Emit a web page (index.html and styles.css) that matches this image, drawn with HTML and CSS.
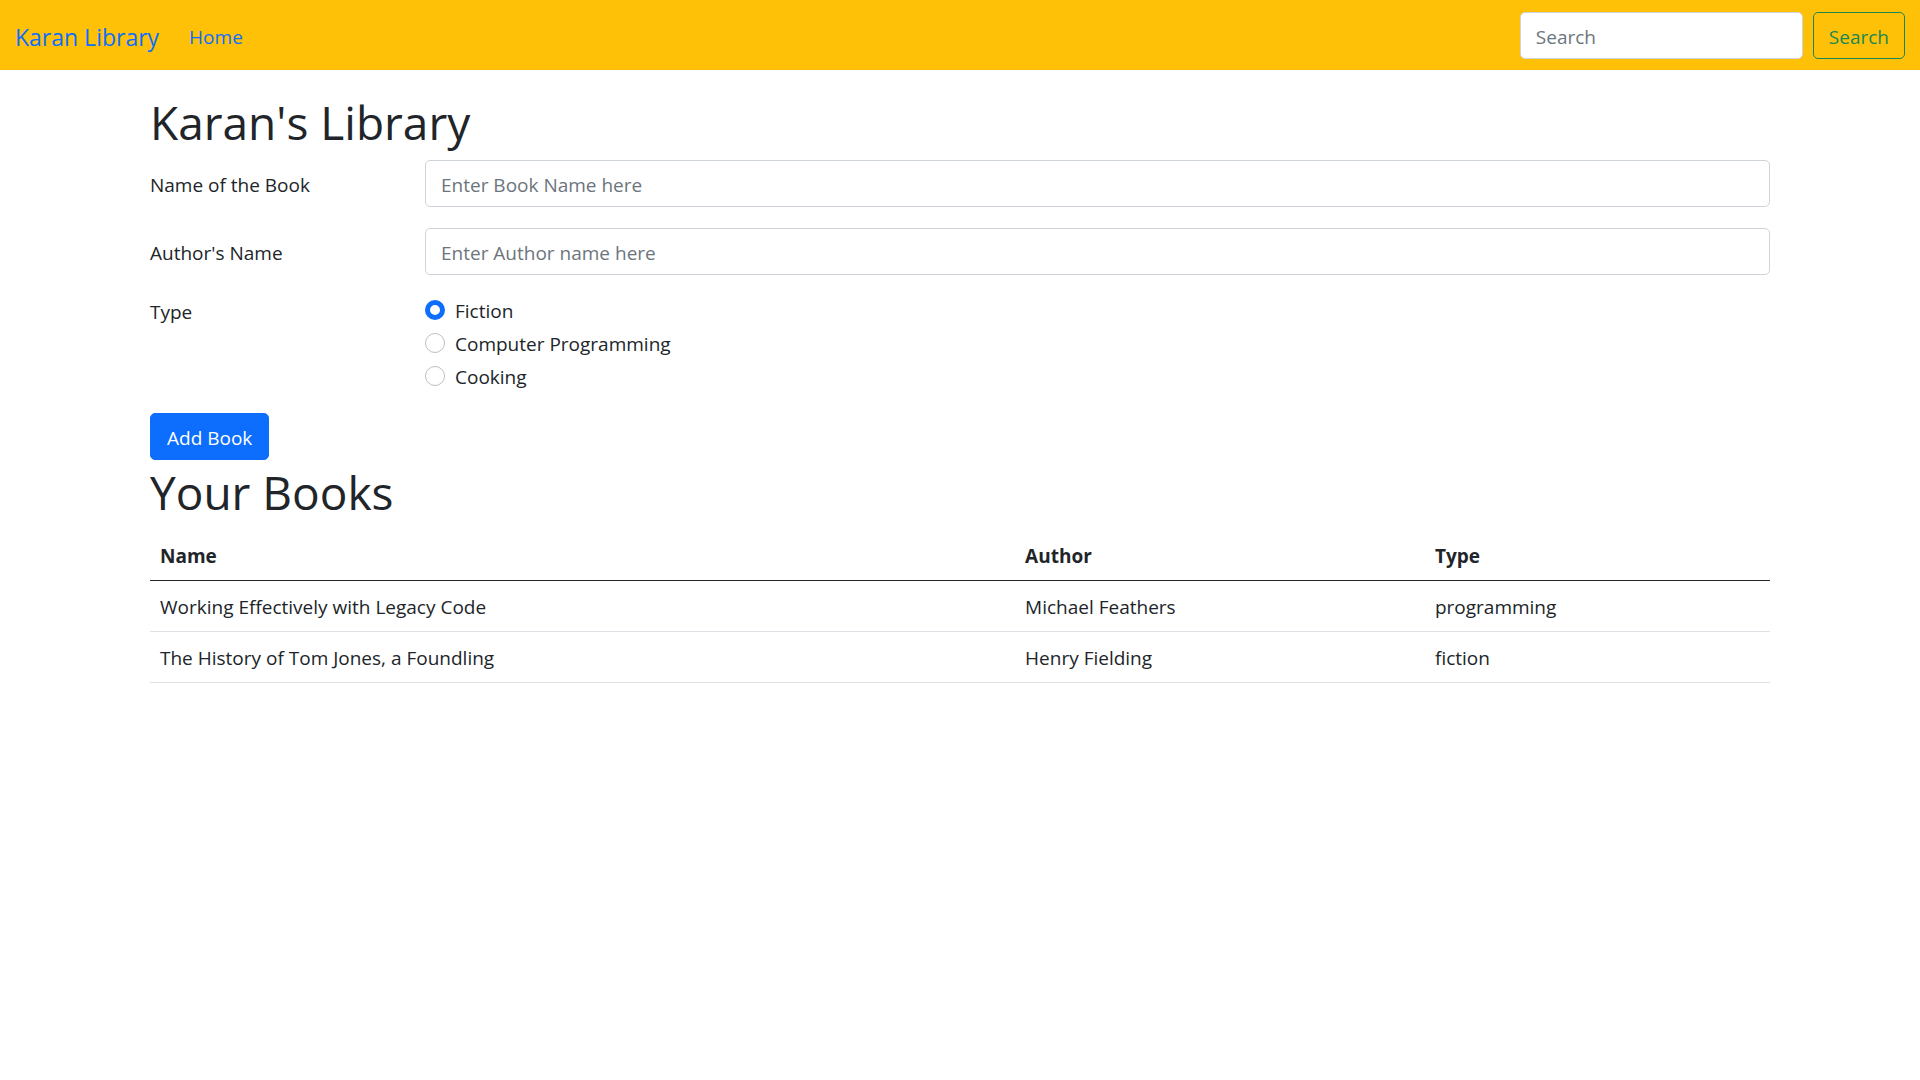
FILE: index.html
```html
<!DOCTYPE html>
<html lang="en">
<head>
  <meta charset="utf-8">
  <meta name="viewport" content="width=device-width, initial-scale=1">
  <title>Karan Library</title>
  <link rel="stylesheet" href="styles.css">
</head>
<body>
  <nav class="navbar">
    <a class="navbar-brand" href="#">Karan Library</a>
    <a class="nav-link" href="#">Home</a>
    <form class="search-form" role="search">
      <input class="form-control search-input" type="search" placeholder="Search" aria-label="Search">
      <button class="btn btn-outline" type="submit">Search</button>
    </form>
  </nav>

  <main class="container">
    <h1 class="heading">Karan's Library</h1>
    <form class="book-form">
      <div class="form-row">
        <label class="form-label" for="bookName">Name of the Book</label>
        <div class="form-field">
          <input class="form-control" type="text" id="bookName" placeholder="Enter Book Name here">
        </div>
      </div>
      <div class="form-row">
        <label class="form-label" for="author">Author's Name</label>
        <div class="form-field">
          <input class="form-control" type="text" id="author" placeholder="Enter Author name here">
        </div>
      </div>
      <div class="form-row" role="radiogroup" aria-labelledby="typeLabel">
        <div class="form-legend" id="typeLabel">Type</div>
        <div class="form-field form-checks">
          <div class="form-check">
            <input class="form-radio" type="radio" name="type" id="fiction" checked>
            <label for="fiction">Fiction</label>
          </div>
          <div class="form-check">
            <input class="form-radio" type="radio" name="type" id="programming">
            <label for="programming">Computer Programming</label>
          </div>
          <div class="form-check">
            <input class="form-radio" type="radio" name="type" id="cooking">
            <label for="cooking">Cooking</label>
          </div>
        </div>
      </div>
      <button class="btn btn-primary" type="submit">Add Book</button>
    </form>

    <h1 class="heading">Your Books</h1>
    <table class="table">
      <thead>
        <tr>
          <th class="col-name" scope="col">Name</th>
          <th class="col-author" scope="col">Author</th>
          <th scope="col">Type</th>
        </tr>
      </thead>
      <tbody>
        <tr>
          <td>Working Effectively with Legacy Code</td>
          <td>Michael Feathers</td>
          <td>programming</td>
        </tr>
        <tr>
          <td>The History of Tom Jones, a Foundling</td>
          <td>Henry Fielding</td>
          <td>fiction</td>
        </tr>
      </tbody>
    </table>
  </main>
</body>
</html>
```
FILE: styles.css
```css
*,
*::before,
*::after {
  box-sizing: border-box;
}

body {
  margin: 0;
  background: #fff;
  color: #212529;
  font-family: "Segoe UI", "Open Sans", "Noto Sans", sans-serif;
  font-size: 19px;
  line-height: 30px;
}

.navbar {
  display: flex;
  align-items: center;
  padding: 12px 15px 11px;
  background: #ffc107;
}

.navbar a {
  padding-top: 2px;
  color: #0d6efd;
  text-decoration: none;
}

.navbar-brand {
  margin-right: 30px;
  font-size: 23px;
}

.search-form {
  display: flex;
  gap: 10px;
  margin-left: auto;
}

.search-form .search-input {
  width: 283px;
}

.form-control {
  display: block;
  width: 100%;
  height: 47px;
  margin: 0;
  padding: 9px 15px 6px;
  border: 1px solid #ced4da;
  border-radius: 5px;
  background: #fff;
  color: #212529;
  font: inherit;
  appearance: none;
}

.form-control::placeholder {
  color: #6c757d;
  opacity: 1;
}

.btn {
  height: 47px;
  padding: 2px 15px 0;
  border: 1px solid;
  border-radius: 5px;
  font: inherit;
  white-space: nowrap;
  cursor: pointer;
}

.btn-outline {
  border-color: #198754;
  background: transparent;
  color: #198754;
}

.btn-primary {
  display: block;
  padding: 2px 16px 0;
  border-color: #0d6efd;
  background: #0d6efd;
  color: #fff;
}

.container {
  max-width: 1650px;
  margin: 20px auto;
  padding: 0 15px;
}

.heading {
  margin: 0 0 6px;
  font-size: 46px;
  font-weight: 400;
  line-height: 64px;
}

.form-row {
  display: grid;
  grid-template-columns: 1fr 5fr;
  margin: 0 -15px 21px;
}

.form-label,
.form-legend,
.form-field {
  padding: 0 15px;
}

.form-label {
  padding-top: 10px;
}

.form-legend {
  padding-top: 1px;
}

.form-checks {
  display: grid;
  gap: 3px;
}

.form-check {
  display: flex;
  gap: 10px;
}

.form-radio {
  flex: none;
  width: 20px;
  height: 20px;
  margin: 4px 0 0;
  border: 1px solid #bfbfbf;
  border-radius: 50%;
  background: #fff;
  appearance: none;
}

.form-radio:checked {
  border: 5px solid #0d6efd;
}

.table {
  width: 100%;
  border-collapse: collapse;
  table-layout: fixed;
}

.table th,
.table td {
  padding: 11px 10px 9px;
  border-bottom: 1px solid #dee2e6;
  text-align: left;
}

.table th {
  border-bottom-color: #212529;
}

.col-name {
  width: 53.4%;
}

.col-author {
  width: 25.3%;
}
```
